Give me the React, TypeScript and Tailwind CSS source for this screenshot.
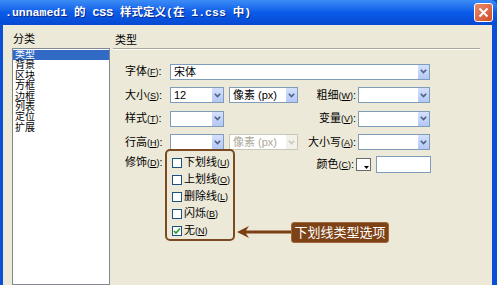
import React from "react";

const font = { fontFamily: '"Liberation Sans", "Noto Sans CJK SC", sans-serif' };

const Arrow = ({ disabled = false }: { disabled?: boolean }) => (
  <div
    className={
      "w-[12px] h-full flex items-center justify-center border-l border-white " +
      (disabled ? "bg-[#f2f1ea]" : "bg-gradient-to-b from-[#d4e0fc] to-[#b4c8f6]")
    }
  >
    <svg width="7" height="5" viewBox="0 0 7 5">
      <path d="M0.8 0.8 L3.5 3.6 L6.2 0.8" fill="none" stroke={disabled ? "#c9c7ba" : "#4d6185"} strokeWidth="1.6" />
    </svg>
  </div>
);

const Select = ({ w, value = "", disabled = false }: { w: string; value?: string; disabled?: boolean }) => (
  <div
    className={
      w +
      " h-[16px] flex items-stretch border bg-white " +
      (disabled ? "border-[#c9c7ba] text-[#aca899]" : "border-[#7f9db9] text-black")
    }
  >
    <div className="flex-1 pl-[3px] text-[11px] leading-[14px] overflow-hidden whitespace-nowrap">{value}</div>
    <Arrow disabled={disabled} />
  </div>
);

const Label = ({ text, k, w, right = false }: { text: string; k: string; w: string; right?: boolean }) => (
  <div className={w + " text-[11px] leading-[16px] whitespace-nowrap " + (right ? "text-right pr-[2px]" : "")}>
    {text}
    <span className="text-[9px]">
      (<u>{k}</u>)
    </span>
    :
  </div>
);

const Check = ({ text, k, checked = false }: { text: string; k: string; checked?: boolean }) => (
  <div className="h-[17px] flex items-center gap-[2px]">
    <div className="w-[10px] h-[10px] border border-[#1c5180] bg-white flex items-center justify-center">
      {checked && (
        <svg width="8" height="8" viewBox="0 0 8 8">
          <path d="M1 4 L3 6 L7 1.5" fill="none" stroke="#21a121" strokeWidth="1.6" />
        </svg>
      )}
    </div>
    <div className="text-[11px] leading-[13px] whitespace-nowrap">
      {text}
      <span className="text-[9px]">
        (<u>{k}</u>)
      </span>
    </div>
  </div>
);

const items = ["类型", "背景", "区块", "方框", "边框", "列表", "定位", "扩展"];

export default function App() {
  return (
    <div className="relative w-[497px] h-[285px] overflow-hidden flex flex-col bg-[#0a4fd6] text-black" style={font}>
      {/* title bar */}
      <div className="h-[25px] flex items-center pl-[5px] pr-[4px] bg-gradient-to-b from-[#3c8cf6] via-[#0b5be8] to-[#0649d2] rounded-tr-[6px]">
        <div
          className="flex-1 text-white font-bold text-[11.5px] whitespace-nowrap [text-shadow:1px_1px_0_#0a2a8a]"
          style={{ fontFamily: '"Liberation Mono", "Noto Sans CJK SC", monospace' }}
        >
          .unnamed1 的 CSS 样式定义(在 1.css 中)
        </div>
        <div className="w-[19px] h-[19px] rounded-[3px] border border-white bg-gradient-to-br from-[#e98a6c] to-[#cf4a22] flex items-center justify-center">
          <svg width="11" height="11" viewBox="0 0 11 11">
            <path d="M1.5 1.5 L9.5 9.5 M9.5 1.5 L1.5 9.5" stroke="#fff" strokeWidth="2" />
          </svg>
        </div>
      </div>

      {/* body */}
      <div className="flex-1 ml-[3px] mr-[5px] bg-[#ece9d8] flex">
        {/* category list */}
        <div className="ml-[9px] w-[98px] flex flex-col pt-[8px]">
          <div className="text-[11px] leading-[13px] ml-[1px]">分类</div>
          <div className="mt-[2px] flex-1 bg-white border border-[#828790] pt-[1px]">
            {items.map((t, i) => (
              <div
                key={t}
                className={
                  "text-[10px] leading-[10.4px] h-[10.4px] pl-[2px] " + (i === 0 ? "bg-[#316ac5] text-white" : "")
                }
              >
                {t}
              </div>
            ))}
          </div>
        </div>

        {/* type panel */}
        <div className="ml-[3px] w-[367px] flex flex-col pt-[9px]">
          <div className="text-[11px] leading-[13px] ml-[2px] h-[14px]">类型</div>
          <div className="border-t border-[#aca899] border-b border-b-white" />

          <div className="mt-[13px] pl-[12px] flex flex-col gap-[6.5px]">
            <div className="flex items-center">
              <Label text="字体" k="F" w="w-[45px]" />
              <div className="w-[260px] h-[16px] flex items-stretch border border-[#7f9db9] bg-white">
                <div className="flex-1 pl-[3px] text-[11px] leading-[14px]">宋体</div>
                <Arrow />
              </div>
            </div>
            <div className="flex items-center">
              <Label text="大小" k="S" w="w-[45px]" />
              <Select w="w-[54px]" value="12" />
              <div className="w-[5px]" />
              <Select w="w-[69px]" value="像素 (px)" />
              <Label text="粗细" k="W" w="w-[60px]" right />
              <Select w="w-[72px]" />
            </div>
            <div className="flex items-center">
              <Label text="样式" k="T" w="w-[45px]" />
              <Select w="w-[54px]" />
              <div className="w-[74px]" />
              <Label text="变量" k="V" w="w-[60px]" right />
              <Select w="w-[72px]" />
            </div>
            <div className="flex items-center">
              <Label text="行高" k="H" w="w-[45px]" />
              <Select w="w-[54px]" />
              <div className="w-[5px]" />
              <Select w="w-[69px]" value="像素 (px)" disabled />
              <Label text="大小写" k="A" w="w-[60px]" right />
              <Select w="w-[72px]" />
            </div>
          </div>

          <div className="mt-[3.5px] pl-[12px] flex items-start">
            <div className="h-[17px] flex items-center">
              <Label text="修饰" k="D" w="w-[47px]" />
            </div>
            <div className="w-[126px] flex flex-col">
              <Check text="下划线" k="U" />
              <Check text="上划线" k="O" />
              <Check text="删除线" k="L" />
              <Check text="闪烁" k="B" />
              <Check text="无" k="N" checked />
            </div>
            <div className="mt-[1px] h-[18px] flex items-center">
              <Label text="颜色" k="C" w="w-[58px]" right />
              <div className="w-[15px] h-[13px] border border-[#6a6a6a] bg-white relative">
                <svg className="absolute right-[1px] bottom-[1px]" width="5" height="3" viewBox="0 0 5 3">
                  <path d="M0 0 L5 0 L2.5 3 Z" fill="#000" />
                </svg>
              </div>
              <div className="ml-[5px] w-[55px] h-[17px] border border-[#7f9db9] bg-white" />
            </div>
          </div>
        </div>
      </div>

      {/* annotation */}
      <div className="absolute left-[165px] top-[149px] w-[70px] h-[92px] border-2 border-[#7b4a20] rounded-[5px]" />
      <svg className="absolute left-[234px] top-[224px]" width="60" height="16" viewBox="0 0 60 16">
        <path d="M3 8 L15 2 L12 6.5 L58 6.5 L58 9.5 L12 9.5 L15 14 Z" fill="#7b3f12" />
      </svg>
      <div className="absolute left-[291px] top-[222px] w-[98px] h-[21px] rounded-[3px] bg-[#7d4216] border border-[#a0683c] flex items-center justify-center text-white text-[13px] leading-[15px] whitespace-nowrap">
        下划线类型选项
      </div>
    </div>
  );
}
